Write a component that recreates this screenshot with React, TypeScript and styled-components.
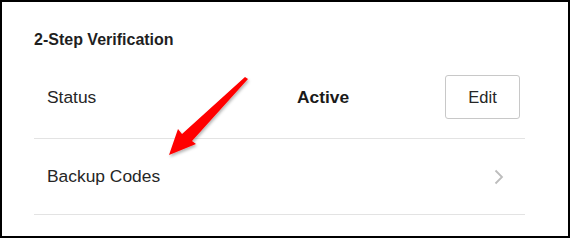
import styled, {createGlobalStyle} from 'styled-components';

const GlobalStyle = createGlobalStyle`
  html, body {
    margin: 0;
    padding: 0;
    background: #fff;
  }
  body {
    font-family: 'Liberation Sans', Arial, sans-serif;
    color: #222;
  }
`;

const Frame = styled.div`
  position: relative;
  box-sizing: border-box;
  width: 570px;
  height: 238px;
  border: 2px solid #000;
  padding: 28px 43px 0 32px;
  overflow: hidden;
`;

const Heading = styled.h2`
  margin: 0;
  font-size: 16px;
  line-height: 20px;
  font-weight: 700;
  color: #1f1f1f;
`;

const List = styled.div`
  margin-top: 10px;
  display: flex;
  flex-direction: column;
`;

const Row = styled.div<{$clickable?: boolean}>`
  box-sizing: border-box;
  display: grid;
  grid-template-columns: 250px 1fr auto;
  align-items: center;
  height: 79px;
  padding: 0 5px 4px 13px;
  border-bottom: 1px solid #e3e3e3;
  cursor: ${(p) => (p.$clickable ? 'pointer' : 'default')};
  &:last-child {
    height: 76px;
    padding-bottom: 0;
  }
`;

const Label = styled.span`
  font-size: 17.4px;
  color: #262626;
`;

const Value = styled.span`
  font-size: 17.4px;
  font-weight: 700;
  color: #1a1a1a;
`;

const EditButton = styled.button`
  box-sizing: border-box;
  width: 75px;
  height: 44px;
  border: 1px solid #c8c8c8;
  border-radius: 3px;
  background: #fff;
  font-family: inherit;
  font-size: 16.5px;
  color: #262626;
  cursor: pointer;
`;

const Chevron = styled.svg`
  margin-right: 16px;
  display: block;
`;

const Pointer = styled.svg`
  position: absolute;
  left: 0;
  top: 0;
  pointer-events: none;
`;

function Arrow() {
  return (
    <Pointer width='570' height='238' viewBox='0 0 570 238'>
      <defs>
        <filter id='sh' x='-20%' y='-20%' width='140%' height='140%'>
          <feDropShadow dx='1' dy='2' stdDeviation='1.5' floodColor='#000' floodOpacity='0.3' />
        </filter>
      </defs>
      <polygon
        filter='url(#sh)'
        fill='#ff0000'
        points='243,75 246,77 190,139 194,142 167,153 176,127 180,132'
      />
    </Pointer>
  );
}

export default function App() {
  return (
    <>
      <GlobalStyle />
      <Frame>
        <Heading>2-Step Verification</Heading>
        <List>
          <Row>
            <Label>Status</Label>
            <Value>Active</Value>
            <EditButton>Edit</EditButton>
          </Row>
          <Row $clickable>
            <Label>Backup Codes</Label>
            <span />
            <Chevron width='10' height='16' viewBox='0 0 10 16'>
              <path d='M1.5 1.5 L8 8 L1.5 14.5' fill='none' stroke='#bdbdbd' strokeWidth='1.8' />
            </Chevron>
          </Row>
        </List>
        <Arrow />
      </Frame>
    </>
  );
}
